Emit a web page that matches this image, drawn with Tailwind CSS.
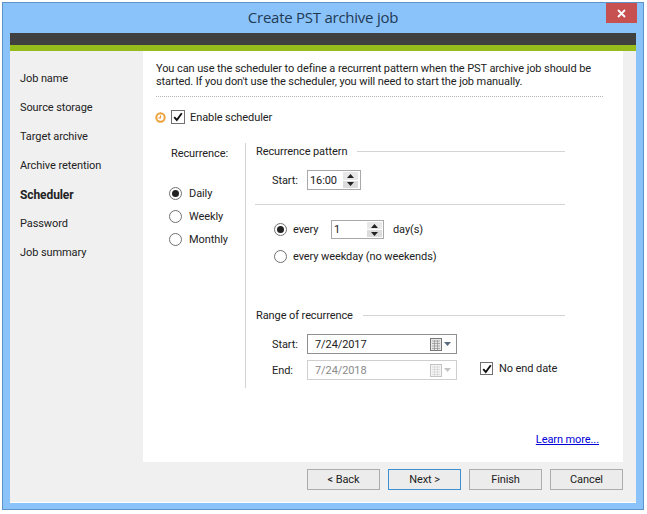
<!DOCTYPE html>
<html><head><meta charset="utf-8"><script src="https://cdn.jsdelivr.net/npm/@tailwindcss/browser@4"></script></head>
<body class="bg-white">
<div class="w-[647px] h-[514px] pt-[2px] pl-[2px] font-['Roboto','Liberation_Sans',sans-serif] text-[11px] tracking-[-0.09px] text-[#222]">
<div class="relative w-[642px] h-[508px] border border-[#5d93c6] bg-[#8ac3f9] flex flex-col">
  <div class="h-[30px] flex items-center justify-center font-['Open_Sans',sans-serif] text-[15px] tracking-[-0.25px] text-[#1f3a56] shrink-0 -mt-px">Create PST archive job</div>
  <div class="absolute top-0 right-[6px] w-[31px] h-[20px] bg-[#c75050] flex items-center justify-center">
    <svg width="9" height="9" viewBox="0 0 9 9"><path d="M1 1L8 8M8 1L1 8" stroke="#fff" stroke-width="1.8"/></svg>
  </div>
  <div class="ml-[7px] w-[626px] h-[470px] flex flex-col border-b border-white bg-[#f0f0f0] mt-px">
    <div class="h-[12px] bg-[#404040] shrink-0"></div>
    <div class="h-[6px] bg-[#95bc1b] shrink-0"></div>
    <div class="flex h-[411px] shrink-0">
      <div class="w-[133px] pt-[13px] pl-[10px] flex flex-col">
        <div class="h-[29px] pt-[2px] flex items-center">Job name</div>
        <div class="h-[29px] pt-[2px] flex items-center">Source storage</div>
        <div class="h-[29px] pt-[2px] flex items-center">Target archive</div>
        <div class="h-[29px] pt-[2px] flex items-center">Archive retention</div>
        <div class="h-[29px] flex items-center font-bold text-[12px]">Scheduler</div>
        <div class="h-[29px] pt-[2px] flex items-center">Password</div>
        <div class="h-[29px] pt-[2px] flex items-center">Job summary</div>
      </div>
      <div class="w-[480px] bg-white flex flex-col">
        <div class="ml-[13px] mr-[20px] h-[46px] pt-[11px] leading-[13px] border-b border-dotted border-[#b5b5b5] whitespace-nowrap">You can use the scheduler to define a recurrent pattern when the PST archive job should be<br>started. If you don't use the scheduler, you will need to start the job manually.</div>
        <div class="mt-[13px] h-[14px] ml-[12px] flex items-center">
          <svg width="11" height="11" viewBox="0 0 11 11"><circle cx="5.5" cy="5.5" r="4.2" fill="#fff" stroke="#eba23a" stroke-width="2"/><path d="M5.5 3.2V5.8H3.4" fill="none" stroke="#eba23a" stroke-width="1.2"/></svg>
          <div class="ml-[5px] w-[14px] h-[14px] border border-[#707070] flex items-center justify-center"><svg width="10" height="10" viewBox="0 0 10 10"><path d="M1.2 5.2L3.8 8L8.8 1.3" fill="none" stroke="#111" stroke-width="1.9"/></svg></div>
          <span class="ml-[5px] pt-[2px]">Enable scheduler</span>
        </div>
        <div class="mt-[19px] h-[245px] flex">
          <div class="w-[103px] border-r border-[#d4d4d4] pl-[28px] flex flex-col">
            <div class="h-[20px] pt-[2px] flex items-center">Recurrence:</div>
            <div class="mt-[19px] h-[23px] flex items-center gap-[7px] -ml-[2px]"><span class="w-[13px] h-[13px] rounded-full border border-[#707070] flex items-center justify-center"><span class="w-[7px] h-[7px] rounded-full bg-[#222]"></span></span><span class="pt-[2px]">Daily</span></div>
            <div class="h-[23px] flex items-center gap-[7px] -ml-[2px]"><span class="w-[13px] h-[13px] rounded-full border border-[#707070]"></span><span class="pt-[2px]">Weekly</span></div>
            <div class="h-[23px] flex items-center gap-[7px] -ml-[2px]"><span class="w-[13px] h-[13px] rounded-full border border-[#707070]"></span><span class="pt-[2px]">Monthly</span></div>
          </div>
          <div class="w-[319px] pl-[10px] flex flex-col">
            <div class="h-[16px] flex items-center"><span class="pt-[2px]">Recurrence pattern</span><span class="flex-1 ml-[10px] h-px bg-[#d4d4d4]"></span></div>
            <div class="mt-[11px] h-[20px] flex items-center pl-[16px]">
              <span class="w-[35px] pt-[2px]">Start:</span>
              <div class="w-[54px] h-[20px] border border-[#a8a8a8] flex items-center justify-between pl-[2px] pr-[2px]"><span class="pt-[2px]">16:00</span>
                <div class="w-[15px] h-[16px] flex flex-col gap-px">
                  <span class="flex-1 bg-[#e8e8e8] flex items-center justify-center"><svg width="7" height="4" viewBox="0 0 7 4"><path d="M3.5 0L7 4H0Z" fill="#222"/></svg></span>
                  <span class="flex-1 bg-[#dcdcdc] flex items-center justify-center"><svg width="7" height="4" viewBox="0 0 7 4"><path d="M3.5 4L7 0H0Z" fill="#222"/></svg></span>
                </div>
              </div>
            </div>
            <div class="mt-[14px] -ml-px h-px bg-[#d4d4d4]"></div>
            <div class="mt-[15px] h-[19px] flex items-center pl-[18px]">
              <span class="w-[13px] h-[13px] rounded-full border border-[#707070] flex items-center justify-center"><span class="w-[7px] h-[7px] rounded-full bg-[#222]"></span></span>
              <span class="ml-[6px] w-[38px] pt-[2px]">every</span>
              <div class="w-[53px] h-[19px] border border-[#a8a8a8] flex items-center justify-between pl-[2px] pr-[1px]"><span class="pt-[2px]">1</span>
                <div class="w-[15px] h-[15px] flex flex-col gap-px">
                  <span class="flex-1 bg-[#e8e8e8] flex items-center justify-center"><svg width="7" height="4" viewBox="0 0 7 4"><path d="M3.5 0L7 4H0Z" fill="#222"/></svg></span>
                  <span class="flex-1 bg-[#dcdcdc] flex items-center justify-center"><svg width="7" height="4" viewBox="0 0 7 4"><path d="M3.5 4L7 0H0Z" fill="#222"/></svg></span>
                </div>
              </div>
              <span class="ml-[9px] pt-[2px]">day(s)</span>
            </div>
            <div class="mt-[8px] h-[19px] flex items-center pl-[18px]">
              <span class="w-[13px] h-[13px] rounded-full border border-[#707070]"></span>
              <span class="ml-[6px] pt-[2px]">every weekday (no weekends)</span>
            </div>
            <div class="mt-[41px] h-[16px] flex items-center"><span class="pt-[2px]">Range of recurrence</span><span class="flex-1 ml-[10px] h-px bg-[#d4d4d4]"></span></div>
            <div class="mt-[11px] h-[20px] flex items-center pl-[16px]">
              <span class="w-[35px] pt-[2px]">Start:</span>
              <div class="w-[150px] h-[20px] border border-[#8f8f8f] flex items-center pl-[7px] pr-[3px]"><span class="flex-1 pt-[2px]">7/24/2017</span>
                <svg width="23" height="13" viewBox="0 0 23 13"><rect x="0.5" y="0.5" width="11" height="12" fill="#e8e8e8" stroke="#777"/><path d="M2 3H10M2 5.5H10M2 8H10M2 10.5H10M4.5 2V12M7.5 2V12" stroke="#999" stroke-width="0.8"/><path d="M14 4H21L17.5 8Z" fill="#5a6b80"/></svg>
              </div>
            </div>
            <div class="mt-[6px] h-[20px] flex items-center pl-[16px]">
              <span class="w-[35px] pt-[2px]">End:</span>
              <div class="w-[150px] h-[20px] border border-[#cfcfcf] flex items-center pl-[7px] pr-[3px] text-[#8a8a8a]"><span class="flex-1 pt-[2px]">7/24/2018</span>
                <svg width="23" height="13" viewBox="0 0 23 13"><rect x="0.5" y="0.5" width="11" height="12" fill="#f4f4f4" stroke="#c4c4c4"/><path d="M2 3H10M2 5.5H10M2 8H10M2 10.5H10M4.5 2V12M7.5 2V12" stroke="#d8d8d8" stroke-width="0.8"/><path d="M14 4H21L17.5 8Z" fill="#c4c4c4"/></svg>
              </div>
              <div class="ml-[23px] w-[13px] h-[13px] -mt-[3px] border border-[#707070] flex items-center justify-center"><svg width="10" height="10" viewBox="0 0 10 10"><path d="M1.2 5.2L3.8 8L8.8 1.3" fill="none" stroke="#111" stroke-width="1.9"/></svg></div>
              <span class="ml-[6px] -mt-[1px]">No end date</span>
            </div>
          </div>
        </div>
        <div class="flex-1 flex items-end justify-end pr-[24px] pb-[14px]"><span class="text-[#0000d8] underline">Learn more...</span></div>
      </div>
    </div>
    <div class="flex-1 flex justify-end gap-[8px] pt-[7px] pr-[13px]">
      <div class="w-[73px] h-[21px] pt-[2px] border border-[#acacac] bg-[#ececec] flex items-center justify-center">&lt; Back</div>
      <div class="w-[73px] h-[21px] pt-[2px] border border-[#3c8fd0] bg-[#ececec] flex items-center justify-center">Next &gt;</div>
      <div class="w-[73px] h-[21px] pt-[2px] border border-[#acacac] bg-[#ececec] flex items-center justify-center">Finish</div>
      <div class="w-[73px] h-[21px] pt-[2px] border border-[#acacac] bg-[#ececec] flex items-center justify-center">Cancel</div>
    </div>
  </div>
</div>
</div>
</body></html>
